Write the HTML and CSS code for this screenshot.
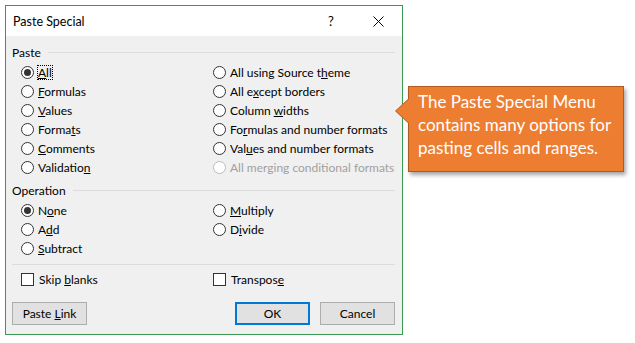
FILE: index.html
```html
<!DOCTYPE html>
<html lang="en">
<head>
    <meta charset="UTF-8">
    <title>Paste Special</title>
    <link rel="stylesheet" href="styles.css">
</head>
<body>
<div class="scene">
    <div class="dialog">
        <div class="titlebar">
            <span class="title">Paste Special</span>
            <span class="help">?</span>
            <svg class="close" width="11" height="11" viewBox="0 0 11 11">
                <path d="M0.5 0.5 L10.5 10.5 M10.5 0.5 L0.5 10.5" />
            </svg>
        </div>
        <div class="content">
            <div class="group-head"><span>Paste</span><i class="rule"></i></div>
            <div class="options">
                <label class="opt"><span class="radio on"></span><span class="focus"><u>A</u>ll</span></label>
                <label class="opt"><span class="radio"></span><span>All using Source t<u>h</u>eme</span></label>
                <label class="opt"><span class="radio"></span><span><u>F</u>ormulas</span></label>
                <label class="opt"><span class="radio"></span><span>All e<u>x</u>cept borders</span></label>
                <label class="opt"><span class="radio"></span><span><u>V</u>alues</span></label>
                <label class="opt"><span class="radio"></span><span>Column <u>w</u>idths</span></label>
                <label class="opt"><span class="radio"></span><span>Forma<u>t</u>s</span></label>
                <label class="opt"><span class="radio"></span><span>Fo<u>r</u>mulas and number formats</span></label>
                <label class="opt"><span class="radio"></span><span><u>C</u>omments</span></label>
                <label class="opt"><span class="radio"></span><span>Val<u>u</u>es and number formats</span></label>
                <label class="opt"><span class="radio"></span><span>Validatio<u>n</u></span></label>
                <label class="opt disabled"><span class="radio"></span><span>All merging conditional formats</span></label>
            </div>

            <div class="group-head op"><span>Operation</span><i class="rule"></i></div>
            <div class="options">
                <label class="opt"><span class="radio on"></span><span>N<u>o</u>ne</span></label>
                <label class="opt"><span class="radio"></span><span><u>M</u>ultiply</span></label>
                <label class="opt"><span class="radio"></span><span>A<u>d</u>d</span></label>
                <label class="opt"><span class="radio"></span><span>D<u>i</u>vide</span></label>
                <label class="opt"><span class="radio"></span><span><u>S</u>ubtract</span></label>
            </div>

            <div class="separator"></div>
            <div class="options">
                <label class="opt"><span class="check"></span><span>Skip <u>b</u>lanks</span></label>
                <label class="opt"><span class="check"></span><span>Transpos<u>e</u></span></label>
            </div>

            <div class="buttons">
                <button class="btn">Paste <u>L</u>ink</button>
                <span class="spacer"></span>
                <button class="btn default">OK</button>
                <button class="btn">Cancel</button>
            </div>
        </div>
    </div>
    <div class="callout">
        The Paste Special Menu contains many options for pasting cells and ranges.
    </div>
</div>
</body>
</html>
```

FILE: styles.css
```css
body {
    margin: 0;
    background: #fff;
    color: #000;
    font-family: Lato, "Noto Sans", sans-serif;
    font-size: 12px;
}

.scene {
    display: flex;
    align-items: flex-start;
    padding: 5px;
}

.dialog {
    width: 396px;
    height: 328px;
    border: 1px solid #3a9a52;
    background: #f0f0f0;
    flex: none;
}

.titlebar {
    height: 30px;
    background: #fff;
    display: flex;
    align-items: center;
    padding-left: 7px;
}

.title {
    flex: 1;
    font-size: 12.5px;
}

.help {
    width: 45px;
    font-size: 13px;
}

.close {
    margin-right: 18px;
    stroke: #000;
    stroke-width: 1;
    fill: none;
}

.content {
    padding: 8px 7px 0 6px;
}

.group-head {
    display: flex;
    align-items: center;
    height: 16px;
    gap: 7px;
}

.group-head.op {
    margin-top: 5px;
}

.rule {
    flex: 1;
    height: 1px;
    background: #dcdcdc;
}

.options {
    display: grid;
    grid-template-columns: 192px 1fr;
    padding-left: 9px;
    margin-top: 3px;
}

.opt {
    height: 19px;
    display: flex;
    align-items: center;
    white-space: nowrap;
}

.opt.disabled {
    color: #a0a0a0;
}

.radio {
    width: 11px;
    height: 11px;
    border: 1px solid #333;
    border-radius: 50%;
    background: #fff;
    margin-right: 4px;
    display: grid;
    place-items: center;
    flex: none;
}

.radio.on::after {
    content: "";
    width: 7px;
    height: 7px;
    border-radius: 50%;
    background: #333;
}

.disabled .radio {
    border-color: #bcbcbc;
}

.focus {
    outline: 1px dotted #000;
    outline-offset: 0;
    line-height: 13px;
}

.separator {
    height: 1px;
    background: #dcdcdc;
    margin-top: 6px;
    margin-bottom: 5px;
}

.check {
    width: 11px;
    height: 11px;
    border: 1px solid #333;
    background: #fff;
    margin-right: 5px;
    flex: none;
}

.buttons {
    display: flex;
    gap: 10px;
    margin-top: 13px;
}

.spacer {
    flex: 1;
}

.btn {
    width: 75px;
    height: 23px;
    background: #e1e1e1;
    border: 1px solid #adadad;
    font-family: inherit;
    font-size: 12px;
    color: #000;
    padding: 0;
}

.btn.default {
    border: 2px solid #0078d7;
}

.callout {
    position: relative;
    margin-left: 5px;
    margin-top: 81px;
    width: 205px;
    height: 81px;
    padding: 3px 0 0 9px;
    background: #ed7d31;
    border: 1px solid #ae5a21;
    color: #fff;
    font-family: Lato, sans-serif;
    font-size: 17px;
    line-height: 23px;
    box-shadow: 2px 3px 4px rgba(0, 0, 0, 0.35);
}

.callout::before {
    content: "";
    position: absolute;
    left: -14px;
    top: 11px;
    border-style: solid;
    border-width: 13px 14px 13px 0;
    border-color: transparent #ae5a21 transparent transparent;
}

.callout::after {
    content: "";
    position: absolute;
    left: -13px;
    top: 12px;
    border-style: solid;
    border-width: 12px 13px 12px 0;
    border-color: transparent #ed7d31 transparent transparent;
}
```
